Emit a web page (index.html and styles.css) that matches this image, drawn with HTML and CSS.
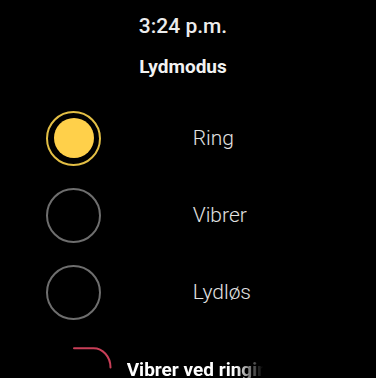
FILE: index.html
```html
<!DOCTYPE html>
<html>
<head>
<meta charset="utf-8">
<link rel="stylesheet" href="styles.css">
</head>
<body>
<div class="screen">
  <header class="header">
    <div class="time">3:24 p.m.</div>
    <h1 class="title">Lydmodus</h1>
  </header>
  <ul class="options">
    <li class="option">
      <span class="radio radio-on"><span class="dot"></span></span>
      <span class="label">Ring</span>
    </li>
    <li class="option">
      <span class="radio"></span>
      <span class="label">Vibrer</span>
    </li>
    <li class="option">
      <span class="radio"></span>
      <span class="label">Lydløs</span>
    </li>
    <li class="toggle-row">
      <svg class="toggle-arc" width="40" height="34" viewBox="0 0 40 34">
        <path d="M1 1.3 H20 A17 19 0 0 1 37.5 20.5" fill="none" stroke="#c93f58" stroke-width="2" stroke-linecap="round"/>
      </svg>
      <span class="toggle-label">Vibrer ved ringing</span>
    </li>
  </ul>
</div>
</body>
</html>
```

FILE: styles.css
```css
* { box-sizing: border-box; }
html, body {
  margin: 0;
  padding: 0;
  background: #000;
}
.screen {
  width: 376px;
  height: 378px;
  overflow: hidden;
  background: #000;
  font-family: Roboto, "Noto Sans", "Liberation Sans", sans-serif;
  color: #eee;
}
.header {
  display: flex;
  flex-direction: column;
  align-items: center;
  padding: 14px 10px 0 0;
}
.time {
  font-size: 21px;
  line-height: 24px;
  font-weight: 500;
  color: #ececec;
}
.title {
  margin: 17.7px 0 0;
  font-size: 19px;
  line-height: 22px;
  font-weight: 700;
  color: #f2f2f2;
}
.options {
  list-style: none;
  margin: 22.3px 0 0;
  padding: 0;
}
.option {
  display: flex;
  align-items: center;
  height: 77px;
  padding-left: 46px;
}
.radio {
  display: flex;
  align-items: center;
  justify-content: center;
  width: 55px;
  height: 55px;
  border: 2px solid #6e6e6e;
  border-radius: 50%;
  flex: none;
}
.radio-on {
  border-color: #e3bf45;
}
.dot {
  width: 40px;
  height: 40px;
  border-radius: 50%;
  background: #ffd04a;
}
.label {
  margin-left: 91.7px;
  font-size: 21px;
  line-height: 24px;
  font-weight: 300;
  color: #e2e2e2;
}
.toggle-row {
  display: flex;
  align-items: flex-start;
  padding-left: 73px;
  height: 60px;
}
.toggle-arc {
  display: block;
  margin-top: 16px;
  flex: none;
}
.toggle-label {
  margin-top: 28px;
  margin-left: 13.7px;
  width: 136px;
  overflow: hidden;
  white-space: nowrap;
  font-size: 19px;
  line-height: 22px;
  font-weight: 700;
  color: #fff;
  -webkit-mask-image: linear-gradient(to right, #000 80%, transparent 100%);
  mask-image: linear-gradient(to right, #000 80%, transparent 100%);
}
```
